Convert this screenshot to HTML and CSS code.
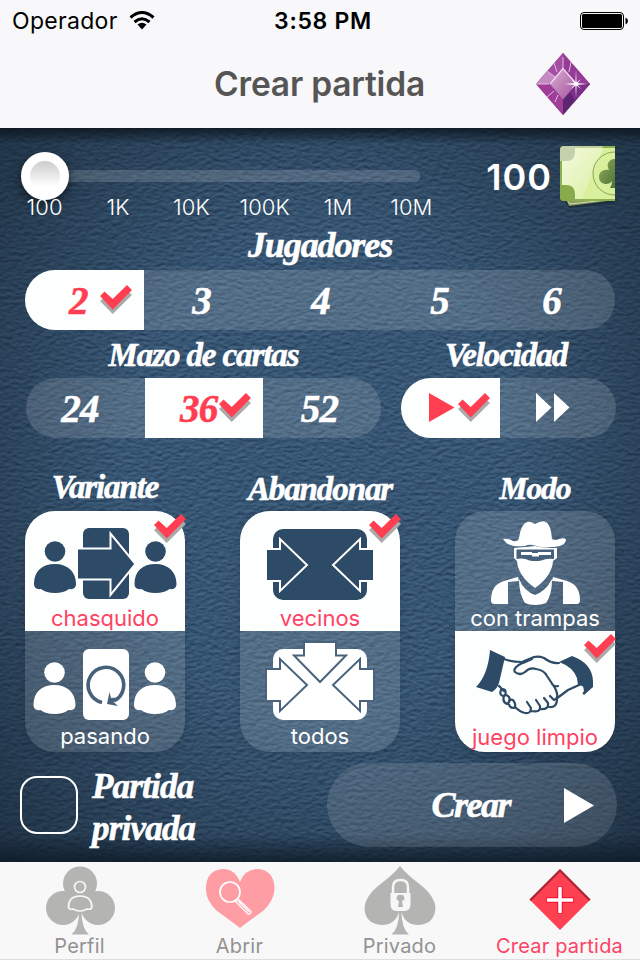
FILE: index.html
```
<!DOCTYPE html>
<html lang="es">

<head>
  <meta charset="UTF-8">
  <meta name="viewport" content="width=device-width, initial-scale=1.0">
  <title>Crear partida</title>
  <link rel="stylesheet" href="styles.css">
</head>

<body>
  <!-- Shared shapes -->
  <svg class="defs" width="0" height="0">
    <symbol id="check" viewBox="0 0 33 30">
      <path d="M0 16l4.5-4 8.2 7.5L27 5l5 5-19.3 19z" fill="#aaa" />
      <path d="M0 11l4.5-4.5 8.2 7.5L27 0l5 5-19.3 19.500z" fill="#ff3e51" />
    </symbol>
    <symbol id="person" viewBox="0 0 44 54">
      <circle cx="22" cy="11.5" r="10.3" />
      <path d="M1 44C1 31 9 24 22 24s21 8 21 20q0 6-7 5Q31 53 22 53T8 49Q1 50 1 44z" />
    </symbol>
  </svg>

  <header class="header">
    <div class="status">
      <div class="carrier">
        <span>Operador</span>
        <svg width="26" height="19" viewBox="0 0 26 19">
          <g fill="none" stroke="#000" stroke-width="3">
            <path d="M1.500 6.500Q13-3.500 24.500 6.500" />
            <path d="M5.500 11Q13 4.500 20.500 11" />
          </g>
          <path d="M8.500 13.500Q13 10 17.500 13.500L13 18.500z" />
        </svg>
      </div>
      <span class="time">3:58 PM</span>
      <svg class="battery" width="50" height="20" viewBox="0 0 50 20">
        <rect x="1.500" y="1.500" width="43" height="17" rx="3.500" fill="none" stroke="#000" />
        <rect x="3" y="3" width="40" height="14" rx="1.500" />
        <path d="M46.500 6.500q2.500 1 2.500 3.500t-2.500 3.500z" />
      </svg>
    </div>
    <div class="navbar">
      <h1>Crear partida</h1>
      <svg class="gem" width="56" height="62" viewBox="0 0 56 62">
        <defs>
          <linearGradient id="gemIn" x1="0" y1="0" x2="1" y2="1">
            <stop offset="0" stop-color="#d9aed2" />
            <stop offset="1" stop-color="#a3539f" />
          </linearGradient>
        </defs>
        <path d="M28 0l27 31-27 31L1 31z" fill="#923897" />
        <path d="M28 0v16L14 31H1z" fill="#a44fa3" />
        <path d="M28 0v16l14 15h13z" fill="#963c97" />
        <path d="M28 62V46l14-15h13z" fill="#5d2670" />
        <path d="M28 62V46L14 31H1z" fill="#a03d98" />
        <path d="M55 31L40 48 35 39 42 31z" fill="#7b2f88" />
        <path d="M12 18l9 6-7 7H1z" fill="#c58ac2" />
        <path d="M28 15.500L41.500 31 28 46.500 15 31z" fill="url(#gemIn)" />
        <path d="M15 31L28 15.500 41.500 31" stroke="#f0d9ee" stroke-width="1.300" fill="none" />
        <path d="M28 4v11M1 31h13M12 18l8 6M12 44l7-6M20 49l3-7M19 10l3 9M36 9l-2 10" stroke="#e2bce0" fill="none" />
        <path d="M41 17l.6 13 10.400 1-10.400 1-.6 13-.6-13-11.400-1 11.400-1zM36 26l5 4 5-4-4 5 4 5-5-4-5 4 4-5z" fill="#fff" />
      </svg>
    </div>
  </header>

  <main class="game">
    <section class="bet">
      <div class="slider">
        <div class="track"><div class="thumb"></div></div>
        <div class="scale">
          <span>100</span><span>1K</span><span>10K</span><span>100K</span><span>1M</span><span>10M</span>
        </div>
      </div>
      <div class="amount">
        <span>100</span>
        <svg width="56" height="64" viewBox="0 0 56 64">
          <defs>
            <linearGradient id="shine" x1="0" y1="0" x2="1" y2="1">
              <stop offset="0" stop-color="#f4fadd" />
              <stop offset="1" stop-color="#d9efa0" />
            </linearGradient>
            <linearGradient id="clubGreen" x1="0" y1="0" x2="1" y2="1">
              <stop offset="0" stop-color="#8fac5c" />
              <stop offset="1" stop-color="#4d7035" />
            </linearGradient>
          </defs>
          <path d="M3 50l6 12 46-5V45z" fill="#1c2f3c" />
          <path d="M5 50l4 10 46-6V45z" fill="#8a9c62" />
          <path d="M6 53l4 5 45-5" stroke="#cedaa0" fill="none" />
          <path d="M4 0h51v55H4q-4 0-4-4V4q0-4 4-4z" fill="#8eaf52" />
          <path d="M2 2h53v51H2z" fill="#d8ef9b" />
          <path d="M2 2h41L22 53H2z" fill="url(#shine)" />
          <path d="M4 0h39l-1 2H2z" fill="#bfd199" />
          <path d="M0 4q0-4 4-4h11v6q0 9-9 9H0z" fill="#c3d2aa" />
          <path d="M0 39h6q9 0 9 9v7H4q-4 0-4-4z" fill="#89ab4c" />
          <path d="M55 6a21.500 21.500 0 0 0-22 21.500A21.500 21.500 0 0 0 55 49" fill="none" stroke="#8aa15d" />
          <path d="M55 13c-7 0-9 6-6 11-6-1-10 2-10 7 0 8 10 9 13 4q0 4-2 7h5z" fill="url(#clubGreen)" />
        </svg>
      </div>
    </section>

    <h2 class="players-title">Jugadores</h2>
    <div class="segment players">
      <div class="cell on"><span>2</span><svg class="tick" width="33" height="30"><use href="#check" /></svg></div>
      <div class="cell">3</div>
      <div class="cell">4</div>
      <div class="cell">5</div>
      <div class="cell">6</div>
    </div>

    <div class="pair">
      <section class="deck">
        <h2>Mazo de cartas</h2>
        <div class="segment">
          <div class="cell">24</div>
          <div class="cell on"><span>36</span><svg class="tick" width="33" height="30"><use href="#check" /></svg></div>
          <div class="cell">52</div>
        </div>
      </section>
      <section class="speed">
        <h2>Velocidad</h2>
        <div class="segment">
          <div class="cell on">
            <svg width="26" height="30"><path d="M0 0l25.500 14.500L0 29z" fill="#ff3e51" /></svg>
            <svg class="tick" width="33" height="30"><use href="#check" /></svg>
          </div>
          <div class="cell">
            <svg width="34" height="30"><path d="M0 0l15.500 14.500L0 29zM18 0l15.500 14.500L18 29z" fill="#fff" /></svg>
          </div>
        </div>
      </section>
    </div>

    <div class="modes">
      <section class="mode variant">
        <h2>Variante</h2>
        <div class="stack">
          <div class="card on">
            <svg class="art" width="160" height="120" viewBox="0 0 160 120">
              <use href="#person" x="8" y="29" width="44" height="54" />
              <use href="#person" x="108.500" y="29" width="44" height="54" />
              <rect x="58" y="17" width="46" height="71" rx="6" />
              <path class="edge" d="M52 37.500h33.500V22.500L110.500 53 85.500 84V68.500H52z" />
            </svg>
            <span>chasquido</span>
            <svg class="badge" width="33" height="30"><use href="#check" /></svg>
          </div>
          <div class="card">
            <svg class="art" width="160" height="120" viewBox="0 0 160 120">
              <use href="#person" x="7.500" y="30" width="44" height="54" />
              <use href="#person" x="108" y="30" width="44" height="54" />
              <rect x="58" y="18" width="46" height="71" rx="6" />
              <path class="line" d="M77 71.500A17.800 17.800 0 1 1 89 70" stroke-width="3.600" />
              <path class="cut" d="M82 73l2.500-12 1.500 6 7-.5-4.500 4.500 4.500 4z" />
            </svg>
            <span>pasando</span>
          </div>
        </div>
      </section>

      <section class="mode leave">
        <h2>Abandonar</h2>
        <div class="stack">
          <div class="card on">
            <svg class="art" width="160" height="120" viewBox="0 0 160 120">
              <rect x="33" y="18" width="94" height="71" rx="10" />
              <path class="edge" d="M26 38h14V28l27 26-27 26V70H26z" />
              <path class="edge" d="M134 38h-14V28L93 54l27 26V70h14z" />
            </svg>
            <span>vecinos</span>
            <svg class="badge" width="33" height="30"><use href="#check" /></svg>
          </div>
          <div class="card">
            <svg class="art" width="160" height="120" viewBox="0 0 160 120">
              <rect x="33" y="18" width="94" height="71" rx="10" />
              <path class="edge" d="M64 11v13.500H54L80 51l26-26.500H96V11z" />
              <path class="edge" d="M26 38h14V28l27 26-27 26V70H26z" />
              <path class="edge" d="M134 38h-14V28L93 54l27 26V70h14z" />
            </svg>
            <span>todos</span>
          </div>
        </div>
      </section>

      <section class="mode fair">
        <h2>Modo</h2>
        <div class="stack">
          <div class="card">
            <svg class="art" width="160" height="120" viewBox="0 0 160 120">
              <path d="M48 28q5-1 10 2 5 1 6-3 2-14 8-16 3-1 8 2 7-4 11-2 5 3 6 17 3 2 7 0 7-2 7 1-1 7-15 7-10 1-18-2-4-1-8 1-17 2-22-7z" />
              <path d="M59 37q13-1 21-2 9 2 22 2v10l-4 3q-1 15-18 27Q63 65 62 50l-3-3z" />
              <path class="cut" d="M61.500 38.500h37.500v9.500q-8-1-12.500 1.500-6 1-12 0-6-3-13-1.500z" />
              <path d="M66 41h11v1h6v-1h13v3H84v1.500h-7V44H66z" />
              <path d="M39 93q-3 0-3-4 0-15 13-19l14-4 1 4-11 1v22zM122 93q3 0 3-4 0-15-13-19l-14-4-1 4 11 1v22z" />
              <path d="M64 68q5 12 16 16 11-4 17-16 0 16-6 24-5 2-11 2t-10-2q-6-9-6-24z" />
            </svg>
            <span>con trampas</span>
          </div>
          <div class="card on">
            <svg class="art" width="160" height="120" viewBox="0 0 160 120">
              <path d="M35 19l15 7-6 26q-2 6-7 9l-16-5q12-12 14-37zM104 31l13-6q20 7 21 25l0 6-9 8q-4-3-2-9l-4-1-1-7q-4-11-18-16z" />
              <path d="M124 57l3 6 2-3-1-5z" fill="#fff" />
              <g class="line" stroke-linejoin="round" stroke-linecap="round">
                <path d="M49 28q8 3 18 3l12-5q5-1 10 1 8 6 15 5M69 31q-12 6-9 10 5 4 10 0 5-5 11-3 8 1 11 7l8 12q5 10-1 12l-4-4M77 28l-9 4M44 55q4 4 5 5M97 53q2 3 6 2M124 54l-11 5-12 9" />
                <path d="M46 59q-2 5 2 6 4-1 2-6-3-2-4 0zM49 65q-2 6 3 8 4-2 2-7-3-3-5-1zM54 70q-1 7 5 7 3-3-1-8-3-1-4 1z" />
                <path d="M60 76q5 5 10 6 6 1 6-5l-4-6M76 80q10 2 9-5l-4-6M85 78q9 1 8-6l-4-5M94 76q8 1 8-8" />
              </g>
            </svg>
            <span>juego limpio</span>
            <svg class="badge" width="33" height="30"><use href="#check" /></svg>
          </div>
        </div>
      </section>
    </div>

    <div class="bottom">
      <div class="checkbox"></div>
      <div class="private script">Partida<br>privada</div>
      <div class="create script">
        <span>Crear</span>
        <svg width="30" height="35"><path d="M0 0l30 17.500L0 35z" fill="#fff" /></svg>
      </div>
    </div>
  </main>

  <nav class="tabs">
    <div class="tab">
      <svg width="72" height="72" viewBox="0 0 72 72">
        <g fill="#b4b4b3">
          <circle cx="36" cy="19.500" r="17" />
          <circle cx="19" cy="44" r="17" />
          <circle cx="54" cy="44" r="17" />
          <path d="M26 30h20v19H26zM35 48h2.500q0 16 7.500 22.500H27.500Q35 64 35 48z" />
        </g>
        <g fill="none" stroke="#f7f7f7" stroke-width="1.700">
          <circle cx="36" cy="23" r="5.500" />
          <path d="M24.500 43q0-11 11.500-11t12 11q-1 3-5 2-3 2-7 2t-7-2q-4 1-4.500-2z" />
        </g>
      </svg>
      <span>Perfil</span>
    </div>
    <div class="tab">
      <svg width="72" height="72" viewBox="0 0 72 72">
        <path d="M36 18Q31 5 19 5 3 6 2 23 1 36 13 47 27 57 36 64 45 57 59 47 71 36 70.500 23 69 6 54 5 41 5 36 18z" fill="#ff9da5" />
        <g fill="none" stroke="#fff" stroke-width="1.700">
          <circle cx="26" cy="28" r="10" />
          <path d="M31.500 37.500l2.500-2.500L47 47.500q0 3-3 2.500zM34 37l11 11" stroke-width="1.300" />
        </g>
      </svg>
      <span>Abrir</span>
    </div>
    <div class="tab">
      <svg width="72" height="72" viewBox="0 0 72 72">
        <path d="M36 2q5 7 22 20 13 11 13.500 22-1 16-17 17Q41 61 37.500 48q0 16 7.500 22.500H27.500Q35 64 35 48 31 61 18 61 1 60 .5 44 1 33 14 22 31 9 36 2z" fill="#b4b4b3" />
        <path d="M29 29v-6q0-7 7.500-7t7.500 7v6" fill="none" stroke="#f7f7f7" stroke-width="2.500" />
        <path d="M26.500 29h20v11q0 7-6 7h-8q-6 0-6-7z" fill="#f7f7f7" />
        <path d="M36.500 31a3 3 0 0 1 1.500 6l1 6h-5l1-6a3 3 0 0 1 1.500-6z" fill="#b4b4b3" />
      </svg>
      <span>Privado</span>
    </div>
    <div class="tab active">
      <svg width="72" height="72" viewBox="0 0 72 72">
        <path d="M36 5l30.500 30.500L36 66 5.500 35.500z" fill="#ff4050" />
        <path d="M36 5l30.500 30.500-1.500 1.500L36 8 7 37l-1.500-1.500z" fill="#a82838" />
        <path d="M22.500 36h27M36 22.500v27" stroke="#f0102a" stroke-width="5.500" />
        <path d="M23 36h26M36 23v26" stroke="#fff" stroke-width="3.500" />
      </svg>
      <span>Crear partida</span>
    </div>
  </nav>
</body>

</html>
```
FILE: styles.css
```
* {
  box-sizing: border-box;
}

body {
  margin: 0;
  width: 640px;
  height: 960px;
  overflow: hidden;
  display: flex;
  flex-direction: column;
  font-family: Inter, "Open Sans", sans-serif;
  background: #f7f7f8;
}

svg {
  display: block;
  flex: none;
}

.defs {
  position: absolute;
}

h1,
h2 {
  margin: 0;
}

h2,
.segment,
.script {
  font-family: "Liberation Serif", serif;
  font-style: italic;
  font-weight: bold;
  color: #fff;
  -webkit-text-stroke: 0.6px currentColor;
}

h2 {
  font-size: 33px;
  line-height: 40px;
  letter-spacing: -1.1px;
  text-align: center;
  white-space: nowrap;
}

/* Header */
.header {
  height: 128px;
  background: #f8f7f9;
}

.status {
  height: 41px;
  padding: 0 11px 0 12px;
  display: grid;
  grid-template-columns: 1fr auto 1fr;
  align-items: center;
  font-size: 23px;
}

.carrier {
  display: flex;
  align-items: center;
  gap: 11px;
  letter-spacing: 0.3px;
}

.time {
  padding-left: 5px;
  font-weight: 600;
  font-size: 23px;
  letter-spacing: 0.7px;
}

.battery {
  justify-self: end;
}

.navbar {
  height: 87px;
  padding: 0 49px 1px 104px;
  display: grid;
  grid-template-columns: 1fr 56px;
  align-items: center;
}

h1 {
  text-align: center;
  font-size: 33.5px;
  font-weight: 600;
  letter-spacing: -0.2px;
  color: #555;
}

/* Felt area */
.game {
  height: 734px;
  display: flex;
  flex-direction: column;
  background-color: #375674;
  background-image:
    linear-gradient(#0a121bcc, transparent 16px, transparent 706px, #0d1926cc),
    radial-gradient(ellipse 440px 540px at 50% 48%, transparent 45%, #101a2599 100%),
    url("data:image/svg+xml,%3Csvg xmlns='http://www.w3.org/2000/svg' width='640' height='734'%3E%3Cfilter id='f' x='0' y='0' width='100%25' height='100%25' color-interpolation-filters='sRGB'%3E%3CfeTurbulence type='fractalNoise' baseFrequency='.16 .3' numOctaves='4' seed='4'/%3E%3CfeDiffuseLighting surfaceScale='1.1' lighting-color='%23a6a6a6'%3E%3CfeDistantLight azimuth='260' elevation='50'/%3E%3C/feDiffuseLighting%3E%3C/filter%3E%3Crect width='640' height='734' filter='url(%23f)'/%3E%3C/svg%3E");
  background-blend-mode: normal, normal, soft-light;
}

.bet {
  height: 97px;
  padding: 18px 24px 0 8px;
  display: flex;
  justify-content: space-between;
}

.slider {
  width: 440px;
  padding-top: 24px;
}

.track {
  width: 399px;
  height: 12px;
  margin-left: 13px;
  display: flex;
  align-items: center;
  border-radius: 5px;
  background: linear-gradient(to right, transparent 40px, #ffffff26 40px);
}

.thumb {
  flex: none;
  width: 48px;
  height: 48px;
  border: 9px solid #fff;
  border-radius: 50%;
  background: linear-gradient(#ccc, #fff 85%);
  box-shadow: 0 4px 12px #0009;
}

.scale {
  position: relative;
  display: grid;
  grid-template-columns: repeat(6, 1fr);
  padding-top: 11px;
  text-align: center;
  font-size: 22px;
  line-height: 29px;
  font-weight: 300;
  letter-spacing: 0.1px;
  color: #fff;
}

.amount {
  display: flex;
  gap: 8px;
  font-size: 36px;
  font-weight: 600;
  line-height: 62px;
  letter-spacing: 1px;
  color: #fff;
}

.segment {
  height: 60px;
  display: flex;
  border-radius: 30px;
  overflow: hidden;
  background: #ffffff24;
  font-size: 39px;
  letter-spacing: -0.8px;
}

.cell {
  flex: 1;
  display: flex;
  align-items: center;
  justify-content: center;
}

.on {
  background: #fdfffe;
  color: #ff3e51;
}

.players-title {
  margin-top: -1px;
  padding-top: 1px;
  height: 40px;
  font-size: 36px;
}

.players {
  margin: 6px 25px 0;
}

.players .cell {
  flex: 0 0 119px;
  padding-right: 4px;
}

.players .cell.on {
  justify-content: flex-start;
  padding-left: 44px;
  gap: 12px;
}

.players .cell:last-child {
  flex: 1;
  padding-right: 13px;
}

.pair {
  display: flex;
  gap: 20px;
  padding: 5px 24px 0 26px;
}

.pair .segment {
  margin-top: 3px;
}

.deck {
  width: 355px;
}

.deck .cell:first-child {
  flex: 0 0 119px;
  padding-right: 11px;
}

.deck .cell:last-child {
  padding-right: 5px;
}

.deck .cell.on {
  flex: 0 0 118px;
  justify-content: flex-start;
  padding-left: 35px;
  gap: 2px;
}

.speed {
  flex: 1;
}

.speed h2 {
  padding-right: 5px;
}

.speed .cell.on {
  flex: 0 0 99px;
  justify-content: flex-start;
  padding-left: 28px;
  gap: 3px;
}

.speed .cell:last-child {
  padding-right: 10px;
}

/* Mode cards */
.modes {
  display: flex;
  justify-content: space-between;
  padding: 30px 25px 0;
}

.mode {
  width: 160px;
}

.mode h2 {
  height: 43px;
  margin-top: -1px;
  margin-bottom: 1px;
}

.leave h2,
.fair h2 {
  padding-top: 2px;
}

.fair h2 {
  font-size: 31.5px;
}

.stack {
  height: 241px;
  border-radius: 30px;
  background: #ffffff24;
  box-shadow: 0 2px 10px #0002;
}

.card {
  position: relative;
  height: 120px;
  display: grid;
  color: #fff;
  fill: #fff;
}

.card:first-child.on {
  border-radius: 30px 30px 0 0;
}

.card:last-child.on {
  height: 121px;
  border-radius: 0 0 30px 30px;
}

.card.on {
  color: #ff4264;
  fill: #2d4a66;
}

.card > .art,
.card > span {
  grid-area: 1 / 1;
}

.card span {
  align-self: end;
  text-align: center;
  font-size: 22px;
  line-height: 26px;
}

.card:last-child span {
  padding-bottom: 2px;
}

.badge {
  position: absolute;
  top: 3px;
  right: -2px;
}

.edge {
  stroke: #4a637c;
  stroke-width: 2;
}

.on .edge {
  stroke: #fff;
}

.line {
  fill: none;
  stroke: #48617a;
}

.on .line {
  stroke: #2d4a66;
  stroke-width: 2.2;
}

.cut {
  fill: #48617a;
}

/* Bottom row */
.bottom {
  display: flex;
  padding: 11px 23px 0 20px;
}

.checkbox {
  width: 58px;
  height: 58px;
  margin-top: 13px;
  border: 2px solid #fff;
  border-radius: 17px;
}

.private {
  width: 235px;
  margin-left: 14px;
  margin-top: 3px;
  font-size: 35px;
  line-height: 42px;
  letter-spacing: -0.8px;
}

.create {
  width: 290px;
  height: 84px;
  padding-right: 23px;
  display: flex;
  align-items: center;
  justify-content: flex-end;
  gap: 54px;
  border-radius: 42px;
  background: #ffffff20;
  font-size: 36px;
  letter-spacing: -1.5px;
}

/* Tab bar */
.tabs {
  height: 98px;
  display: grid;
  grid-template-columns: repeat(4, 160px);
  background: #f8f8f8;
  border-bottom: 1px solid #ddd;
}

.tab {
  display: flex;
  flex-direction: column;
  align-items: center;
  padding: 2px 1px 0 0;
  font-size: 20px;
  line-height: 20px;
  letter-spacing: 0.2px;
  white-space: nowrap;
  color: #929292;
}

.tab.active {
  color: #ff4264;
}
```
